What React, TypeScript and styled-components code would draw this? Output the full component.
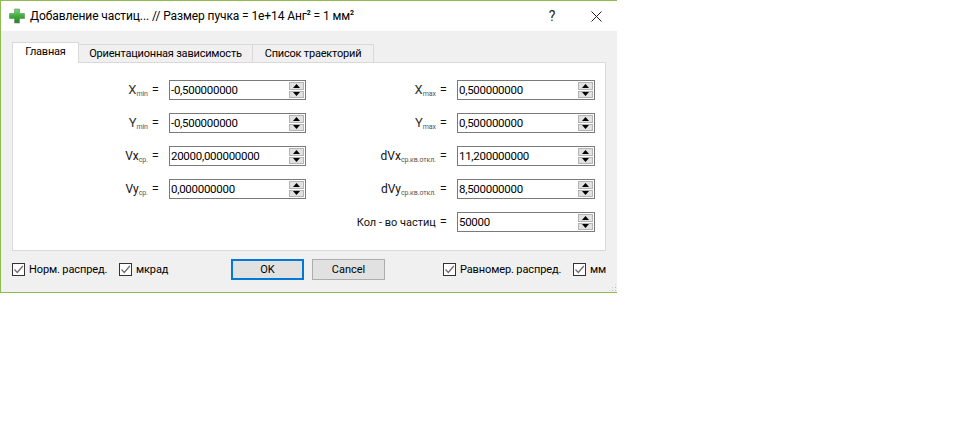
import { createGlobalStyle, styled } from 'styled-components';

const GlobalStyle = createGlobalStyle`
  html, body {
    margin: 0;
    background: #ffffff;
  }
  body {
    font-family: Roboto, "Noto Sans", sans-serif;
    font-size: 11px;
    color: #000000;
  }
`;

const Dialog = styled.div`
  width: 617px;
  height: 293px;
  box-sizing: border-box;
  display: flex;
  flex-direction: column;
  border: 1px solid #8fbc50;
  border-right: none;
  background: #f0f0f0;
`;

const TitleBar = styled.div`
  height: 30px;
  background: #ffffff;
  display: flex;
  align-items: center;
  padding-left: 8px;
  gap: 5px;
  flex: none;
`;

const TitleText = styled.div`
  flex: 1;
  font-size: 12px;
  letter-spacing: -0.1px;
  white-space: nowrap;
  sup {
    font-size: 7px;
    font-weight: 700;
    line-height: 0;
    vertical-align: 5px;
  }
`;

const TitleButton = styled.div<{ $width: number }>`
  width: ${(p) => p.$width}px;
  height: 30px;
  margin-left: -5px;
  display: flex;
  align-items: center;
  justify-content: center;
  font-size: 14px;
  color: #222;
`;

const Body = styled.div`
  flex: 1;
  padding: 13px 11px 0 11px;
  display: flex;
  flex-direction: column;
  position: relative;
`;

const TabRow = styled.div`
  display: flex;
  height: 18px;
  position: relative;
  z-index: 1;
  flex: none;
`;

const Tab = styled.div<{ $active?: boolean; $width: number }>`
  width: ${(p) => p.$width}px;
  box-sizing: border-box;
  height: ${(p) => (p.$active ? 21 : 19)}px;
  margin-top: ${(p) => (p.$active ? -2 : 0)}px;
  margin-right: -1px;
  border: 1px solid #d9d9d9;
  border-bottom: ${(p) => (p.$active ? 'none' : '1px solid #d9d9d9')};
  background: ${(p) => (p.$active ? '#ffffff' : '#f0f0f0')};
  display: flex;
  align-items: center;
  justify-content: center;
  font-size: 11px;
  letter-spacing: -0.2px;
  line-height: 1;
  padding-bottom: ${(p) => (p.$active ? 3 : 1)}px;
  z-index: ${(p) => (p.$active ? 2 : 0)};
`;

const Pane = styled.div`
  height: 189px;
  box-sizing: border-box;
  background: #ffffff;
  border: 1px solid #d9d9d9;
  padding: 17px 0 0 0;
  display: grid;
  grid-template-columns: 146px 137px 131px 138px;
  grid-auto-rows: 20px;
  row-gap: 13px;
  column-gap: 10px;
  flex: none;
`;

const Label = styled.div<{ $size: number }>`
  display: flex;
  align-items: baseline;
  justify-content: flex-end;
  white-space: nowrap;
  font-size: ${(p) => p.$size}px;
  line-height: 20px;
  color: ${(p) => (p.$size > 12 ? '#333' : '#111')};
  sub {
    font-size: 7px;
    line-height: 0;
    vertical-align: baseline;
    position: relative;
    top: 2px;
    color: #555;
    letter-spacing: -0.1px;
  }
`;

const Equals = styled.span`
  margin-left: 4px;
  font-size: 13px;
  color: #111;
`;

const SpinBox = styled.div`
  box-sizing: border-box;
  height: 20px;
  border: 1px solid #7a7a7a;
  background: #fff;
  display: flex;
  align-items: stretch;
  padding: 1px;
`;

const SpinValue = styled.div`
  flex: 1;
  font-size: 11.5px;
  line-height: 16px;
  letter-spacing: -0.28px;
`;

const SpinButtons = styled.div`
  width: 15px;
  display: flex;
  flex-direction: column;
  gap: 1px;
`;

const SpinArrow = styled.div`
  flex: 1;
  background: #e1e1e1;
  border: 1px solid #b4b4b4;
  display: flex;
  align-items: center;
  justify-content: center;
  svg {
    display: block;
  }
`;

const Footer = styled.div`
  flex: 1;
  display: flex;
  align-items: flex-start;
  padding-top: 8px;
`;

const CheckItem = styled.div<{ $width: number }>`
  display: flex;
  align-items: center;
  width: ${(p) => p.$width}px;
  height: 21px;
  gap: 4px;
  font-size: 11px;
  letter-spacing: -0.12px;
  white-space: nowrap;
  flex: none;
`;

const CheckBox = styled.div`
  width: 11px;
  height: 11px;
  border: 1px solid #333;
  background: #fff;
  display: flex;
  align-items: center;
  justify-content: center;
  flex: none;
`;

const PushButton = styled.div<{ $default?: boolean }>`
  width: 73px;
  height: 21px;
  box-sizing: border-box;
  background: #e1e1e1;
  border: ${(p) => (p.$default ? '2px solid #0078d7' : '1px solid #adadad')};
  display: flex;
  align-items: center;
  justify-content: center;
  font-size: 11px;
  margin-right: 8px;
  flex: none;
`;

const Grip = styled.div`
  position: absolute;
  right: 0;
  bottom: 0;
  width: 9px;
  height: 9px;
  background-image: radial-gradient(#b8b8b8 1px, transparent 1px);
  background-size: 3px 3px;
  clip-path: polygon(100% 0, 100% 100%, 0 100%);
`;

const Spacer = styled.div<{ $width: number }>`
  width: ${(p) => p.$width}px;
  flex: none;
`;

const PlusIcon = () => (
  <svg width="16" height="16" viewBox="0 0 16 16">
    <defs>
      <linearGradient id="plus" x1="0" y1="0" x2="0" y2="1">
        <stop offset="0" stopColor="#7fd67a" />
        <stop offset="0.5" stopColor="#3fae3c" />
        <stop offset="1" stopColor="#2b7d2b" />
      </linearGradient>
    </defs>
    <path
      d="M5.5 1h5v4.500H15.500v5h-5V15h-5v-4.500H.5v-5h5z"
      fill="url(#plus)"
      stroke="#5c8f5c"
      strokeWidth="0.6"
    />
  </svg>
);

const CloseIcon = () => (
  <svg width="11" height="11" viewBox="0 0 11 11">
    <path d="M.5.500l10 10M10.500.500l-10 10" stroke="#222" strokeWidth="1" fill="none" />
  </svg>
);

const Check = () => (
  <svg width="11" height="11" viewBox="0 0 11 11">
    <path d="M1.500 5.500l2.800 3L9.800 2" stroke="#6d6d6d" strokeWidth="1.300" fill="none" />
  </svg>
);

const Spin = ({ value }: { value: string }) => (
  <SpinBox>
    <SpinValue>{value}</SpinValue>
    <SpinButtons>
      <SpinArrow>
        <svg width="7" height="4" viewBox="0 0 7 4">
          <path d="M3.500 0L7 4H0z" fill="#000" />
        </svg>
      </SpinArrow>
      <SpinArrow>
        <svg width="7" height="4" viewBox="0 0 7 4">
          <path d="M0 0h7L3.500 4z" fill="#000" />
        </svg>
      </SpinArrow>
    </SpinButtons>
  </SpinBox>
);

type FieldProps = {
  name: string,
  sub?: string,
  value: string,
  size?: number
}

const Field = ({ name, sub, value, size = 12 }: FieldProps) => (
  <>
    <Label $size={size}>
      {name}
      {sub && <sub>{sub}</sub>}
      <Equals>=</Equals>
    </Label>
    <Spin value={value} />
  </>
);

const CheckOption = ({ text, width }: { text: string; width: number }) => (
  <CheckItem $width={width}>
    <CheckBox>
      <Check />
    </CheckBox>
    {text}
  </CheckItem>
);

export default function App() {
  return (
    <>
      <GlobalStyle />
      <Dialog>
        <TitleBar>
          <PlusIcon />
          <TitleText>
            Добавление частиц... // Размер пучка = 1e+14 Анг<sup>2</sup> = 1 мм<sup>2</sup>
          </TitleText>
          <TitleButton $width={46}>?</TitleButton>
          <TitleButton $width={42}>
            <CloseIcon />
          </TitleButton>
        </TitleBar>
        <Body>
          <TabRow>
            <Tab $active $width={67}>Главная</Tab>
            <Tab $width={175}>Ориентационная зависимость</Tab>
            <Tab $width={122}>Список траекторий</Tab>
          </TabRow>
          <Pane>
            <Field name="X" sub="min" value="-0,500000000" size={13} />
            <Field name="X" sub="max" value="0,500000000" size={13} />
            <Field name="Y" sub="min" value="-0,500000000" size={13} />
            <Field name="Y" sub="max" value="0,500000000" size={13} />
            <Field name="Vx" sub="ср." value="20000,000000000" />
            <Field name="dVx" sub="ср.кв.откл." value="11,200000000" />
            <Field name="Vy" sub="ср." value="0,000000000" />
            <Field name="dVy" sub="ср.кв.откл." value="8,500000000" />
            <div />
            <div />
            <Field name="Кол - во частиц" value="50000" size={11} />
          </Pane>
          <Footer>
            <CheckOption text="Норм. распред." width={107} />
            <CheckOption text="мкрад" width={112} />
            <PushButton $default>OK</PushButton>
            <PushButton>Cancel</PushButton>
            <Spacer $width={50} />
            <CheckOption text="Равномер. распред." width={130} />
            <CheckOption text="мм" width={30} />
          </Footer>
          <Grip />
        </Body>
      </Dialog>
    </>
  );
}
